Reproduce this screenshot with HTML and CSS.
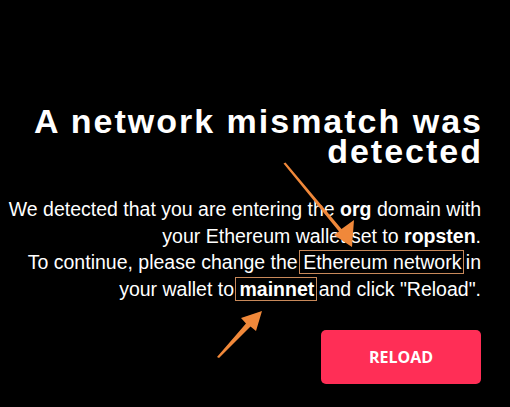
FILE: index.html
```html
<!DOCTYPE html>
<html>
<head>
<meta charset="utf-8">
<link rel="stylesheet" href="styles.css">
</head>
<body>
<main class="page">
  <h1 class="title">A network mismatch was detected</h1>
  <p class="message">We detected that you are entering the <b>org</b> domain with your Ethereum wallet set to <b>ropsten</b>.<br>To continue, please change the <span class="mark">Ethereum network</span> in your wallet to <span class="mark"><b>mainnet</b></span> and click "Reload".</p>
  <div class="actions"><button class="reload">RELOAD</button></div>
</main>
<svg class="arrows" width="510" height="407" viewBox="0 0 510 407">
  <polygon fill="#f0883a" points="283.5,163.5 285.5,162.5 341.5,229 354,220 352,247 334,235 339,231.5"/>
  <polygon fill="#f0883a" points="219,358 217,357 246,323.5 241,318 262,311 256,331 250.5,326.5"/>
</svg>
</body>
</html>
```

FILE: styles.css
```css
html, body {
  margin: 0;
  padding: 0;
  background: #000;
}
body {
  width: 510px;
  height: 407px;
  overflow: hidden;
  position: relative;
  font-family: "Liberation Sans", Arial, sans-serif;
  color: #fff;
}
.page {
  padding: 106px 29px 0 8px;
  text-align: right;
}
.title {
  margin: 0 -2px 0 0;
  font-size: 34px;
  font-weight: 700;
  line-height: 30px;
  letter-spacing: 2px;
}
.message {
  margin: 30px 0 0 0;
  font-size: 19.5px;
  line-height: 26.5px;
}
.mark {
  border: 1px solid #c8895a;
  padding: 0 2px 0 3px;
  margin: 0 -4px 0 -4px;
}
.actions {
  display: flex;
  justify-content: flex-end;
  margin-top: 28px;
}
.reload {
  width: 160px;
  height: 54px;
  border: none;
  border-radius: 5px;
  background: #ff2e56;
  color: #fff;
  font-family: "Open Sans", sans-serif;
  font-weight: 700;
  font-size: 16px;
  padding: 0;
}
.arrows {
  position: absolute;
  left: 0;
  top: 0;
  pointer-events: none;
}
```
